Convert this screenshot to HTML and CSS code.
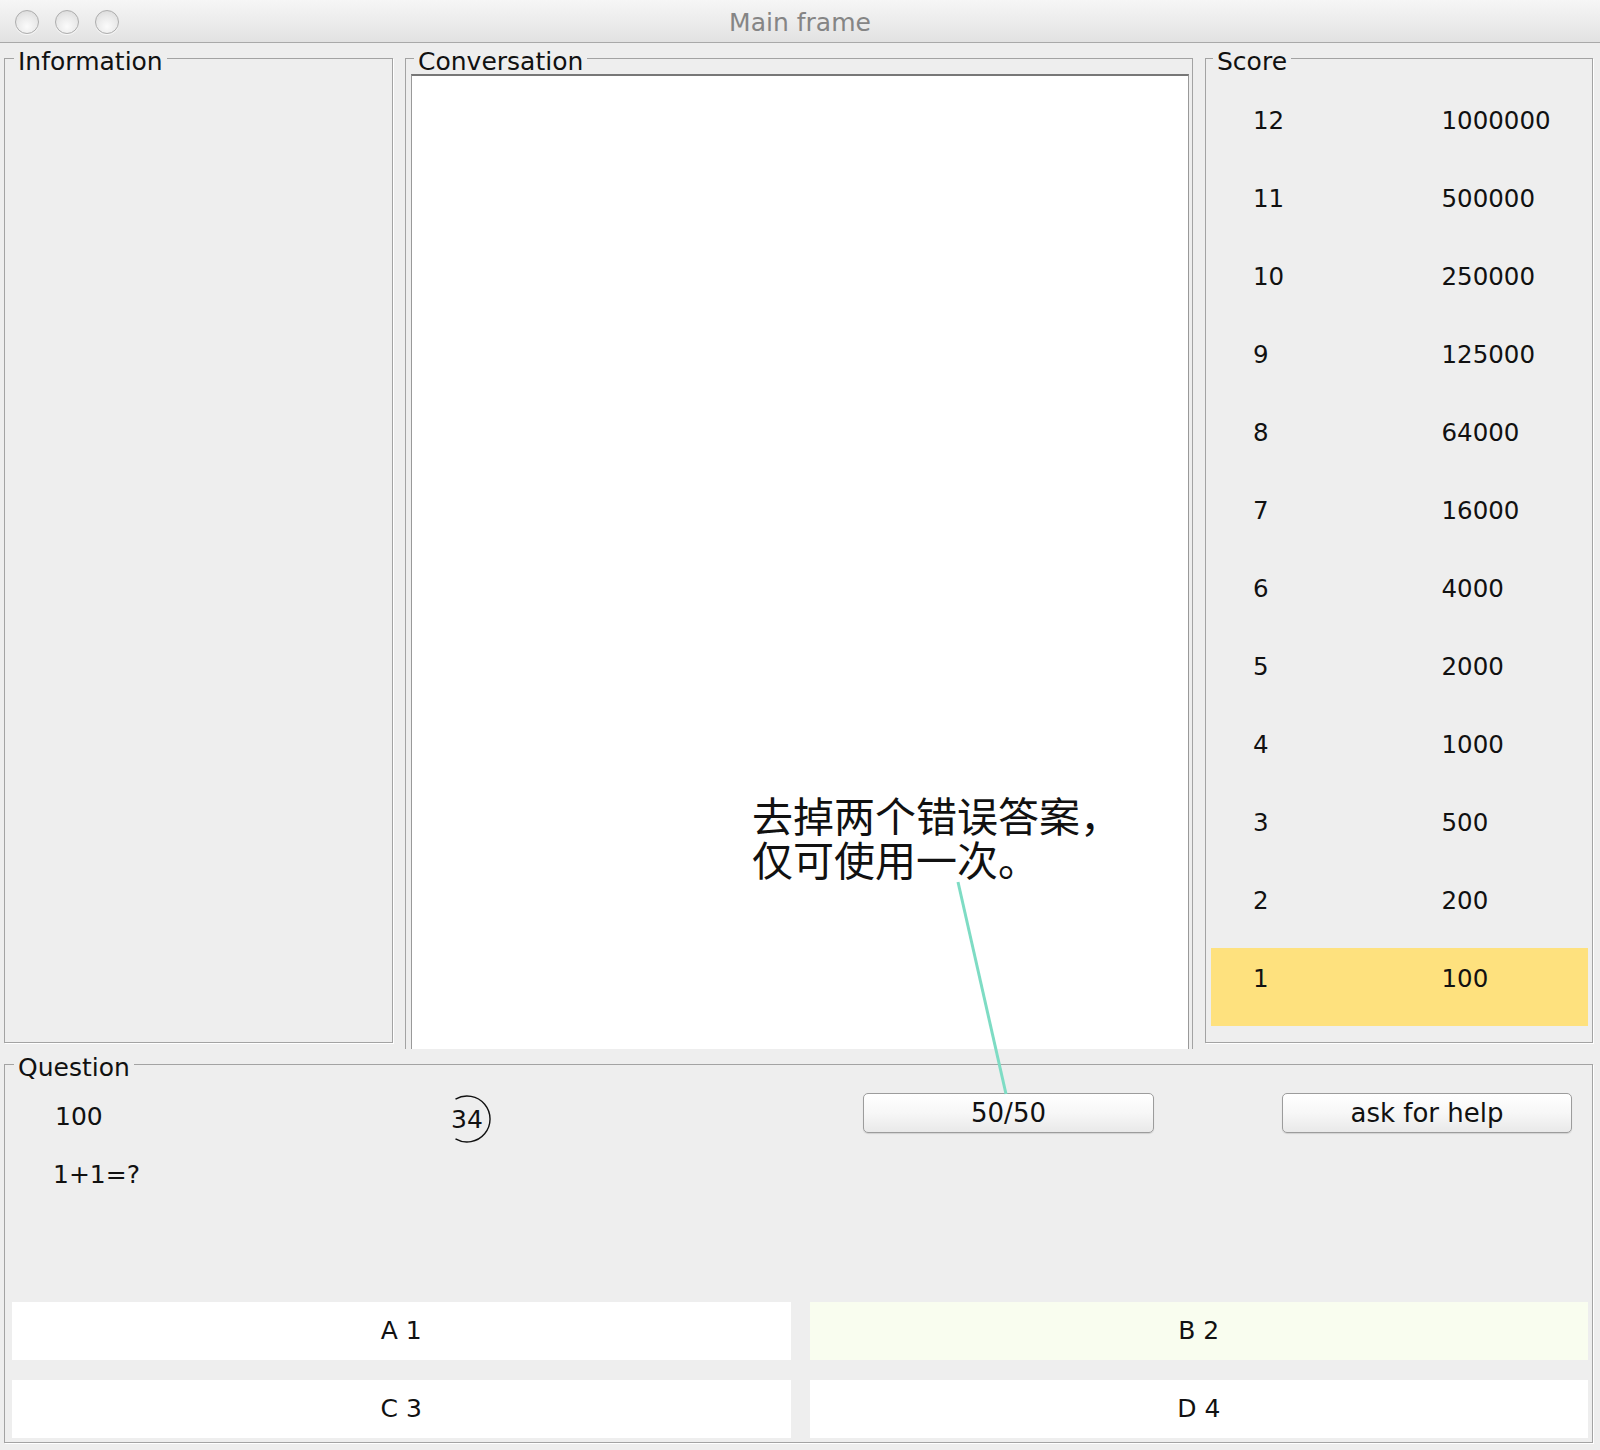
FILE: index.html
```html
<!DOCTYPE html>
<html lang="en">
<head>
<meta charset="utf-8">
<title>Main frame</title>
<link rel="stylesheet" href="styles.css">
</head>
<body>
<div class="window">
  <header class="titlebar">
    <div class="lights">
      <span class="light"></span>
      <span class="light"></span>
      <span class="light"></span>
    </div>
    <div class="title">Main frame</div>
    <div class="spacer"></div>
  </header>

  <main class="content">
    <div class="top-row">
      <fieldset class="panel info">
        <legend>Information</legend>
      </fieldset>

      <fieldset class="panel conv">
        <legend>Conversation</legend>
        <div class="textarea"></div>
      </fieldset>

      <fieldset class="panel score">
        <legend>Score</legend>
        <div class="score-list">
          <div class="score-row"><span>12</span><span>1000000</span></div>
          <div class="score-row"><span>11</span><span>500000</span></div>
          <div class="score-row"><span>10</span><span>250000</span></div>
          <div class="score-row"><span>9</span><span>125000</span></div>
          <div class="score-row"><span>8</span><span>64000</span></div>
          <div class="score-row"><span>7</span><span>16000</span></div>
          <div class="score-row"><span>6</span><span>4000</span></div>
          <div class="score-row"><span>5</span><span>2000</span></div>
          <div class="score-row"><span>4</span><span>1000</span></div>
          <div class="score-row"><span>3</span><span>500</span></div>
          <div class="score-row"><span>2</span><span>200</span></div>
          <div class="score-row current"><span>1</span><span>100</span></div>
        </div>
      </fieldset>
    </div>

    <fieldset class="panel question">
      <legend>Question</legend>
      <div class="q-head">
        <div class="prize">100</div>
        <div class="timer">
          <svg class="timer-arc" width="48" height="48" viewBox="0 0 48 48">
            <path d="M12.5 4.1 A23 23 0 1 1 12.5 43.9" fill="none" stroke="#111" stroke-width="1.4"/>
          </svg>
          <span class="timer-num">34</span>
        </div>
        <button class="btn lifeline">50/50</button>
        <button class="btn help">ask for help</button>
      </div>
      <div class="q-text">1+1=?</div>
      <div class="answers">
        <div class="answer">A 1</div>
        <div class="answer hover">B 2</div>
        <div class="answer">C 3</div>
        <div class="answer">D 4</div>
      </div>
    </fieldset>
  </main>

  <div class="callout">去掉两个错误答案，<br>仅可使用一次。</div>
  <svg class="callout-line" width="1600" height="1450" viewBox="0 0 1600 1450">
    <line x1="958" y1="882" x2="1006" y2="1094" stroke="#7edcc4" stroke-width="3"/>
  </svg>
</div>
</body>
</html>
```

FILE: styles.css
```css
* { box-sizing: border-box; }

html, body {
  margin: 0;
  padding: 0;
  background: #eeeeee;
}

body {
  font-family: "DejaVu Sans", "Noto Sans CJK SC", sans-serif;
  font-size: 25px;
  color: #111;
}

.window {
  position: relative;
  width: 1600px;
  height: 1450px;
  overflow: hidden;
  background: #eeeeee;
}

/* ---------- title bar ---------- */
.titlebar {
  height: 43px;
  border-bottom: 1px solid #a9a9a9;
  background: linear-gradient(#f6f6f6, #e2e2e2);
  display: grid;
  grid-template-columns: 1fr auto 1fr;
  align-items: start;
}

.lights {
  display: flex;
  gap: 16px;
  padding: 10px 0 0 15px;
}

.light {
  width: 24px;
  height: 24px;
  border-radius: 50%;
  border: 1px solid #adadad;
  background: radial-gradient(circle at 50% 70%, #fbfbfb 0%, #e9e9e9 55%, #d6d6d6 100%);
  box-shadow: 0 1px 0 rgba(255,255,255,0.7);
}

.title {
  font-size: 25px;
  line-height: 42px;
  padding-top: 2px;
  color: #858585;
}

/* ---------- panels ---------- */
.content {
  padding: 0 7px 0 4px;
}

.top-row {
  display: grid;
  grid-template-columns: 389px 788px 388px;
  column-gap: 12px;
  align-items: start;
}

.panel {
  margin: 0;
  padding: 0;
  min-width: 0;
  border: 1px solid #a3a3a3;
  box-shadow: 1px 1px 0 #ffffff;
}

.panel legend {
  margin-left: 9px;
  padding: 7px 4px 0;
  font-size: 25px;
  line-height: 23px;
  color: #111;
}

.info {
  height: 1000px;
}

.conv {
  height: 1006px;
  border-bottom: none;
  box-shadow: none;
  display: flex;
  flex-direction: column;
  padding: 1px 3px 0 5px;
}

.conv legend {
  margin-left: 3px;
}

.textarea {
  flex: 1;
  background: #ffffff;
  border-top: 2px solid #777777;
  border-left: 1px solid #999999;
  border-right: 1px solid #999999;
}

.score {
  height: 1000px;
  padding: 17px 4px 0 5px;
}

.score legend {
  margin-left: 2px;
}

.score-row {
  display: grid;
  grid-template-columns: 1fr 1fr;
  height: 78px;
  padding-top: 16px;
  font-size: 24.5px;
  line-height: 30px;
}

.score-row span {
  padding-left: 42px;
}

.score-row.current {
  background: #fee17e;
}

/* ---------- question ---------- */
.question {
  padding: 0 4px 4px 7px;
}

.question legend {
  margin-left: 2px;
}

.q-head {
  display: flex;
  align-items: flex-start;
  padding-top: 14px;
}

.prize {
  margin: 9px 0 0 43px;
  width: 388px;
  line-height: 30px;
}

.timer {
  position: relative;
  width: 48px;
  height: 48px;
  margin-top: 2px;
  display: flex;
  align-items: center;
  justify-content: center;
  padding-top: 2px;
}

.timer-arc {
  position: absolute;
  left: 0;
  top: 0;
}

.timer-num {
  line-height: 30px;
}

.btn {
  font-family: "DejaVu Sans", sans-serif;
  font-size: 26px;
  color: #111;
  height: 40px;
  border: 1px solid #9c9c9c;
  border-radius: 5px;
  background: linear-gradient(#ffffff 0%, #f7f7f7 50%, #e9e9e9 100%);
  box-shadow: 0 1px 1px rgba(0,0,0,0.12);
  padding: 0;
  line-height: 36px;
}

.lifeline {
  width: 291px;
  margin-left: 372px;
}

.help {
  width: 290px;
  margin-left: 128px;
}

.q-text {
  margin: 17px 0 0 41px;
  line-height: 30px;
}

.answers {
  margin-top: 112px;
  display: grid;
  grid-template-columns: 1fr 1fr;
  column-gap: 19px;
  row-gap: 20px;
}

.answer {
  height: 58px;
  background: #ffffff;
  display: flex;
  align-items: center;
  justify-content: center;
  font-size: 25px;
  line-height: 30px;
}

.answer.hover {
  background: #f9fdef;
}

/* ---------- annotation ---------- */
.callout {
  position: absolute;
  left: 752px;
  top: 792px;
  font-family: "Noto Sans CJK SC", sans-serif;
  font-size: 41px;
  line-height: 44px;
  color: #111;
  white-space: nowrap;
}

.callout-line {
  position: absolute;
  left: 0;
  top: 0;
  pointer-events: none;
}
```
